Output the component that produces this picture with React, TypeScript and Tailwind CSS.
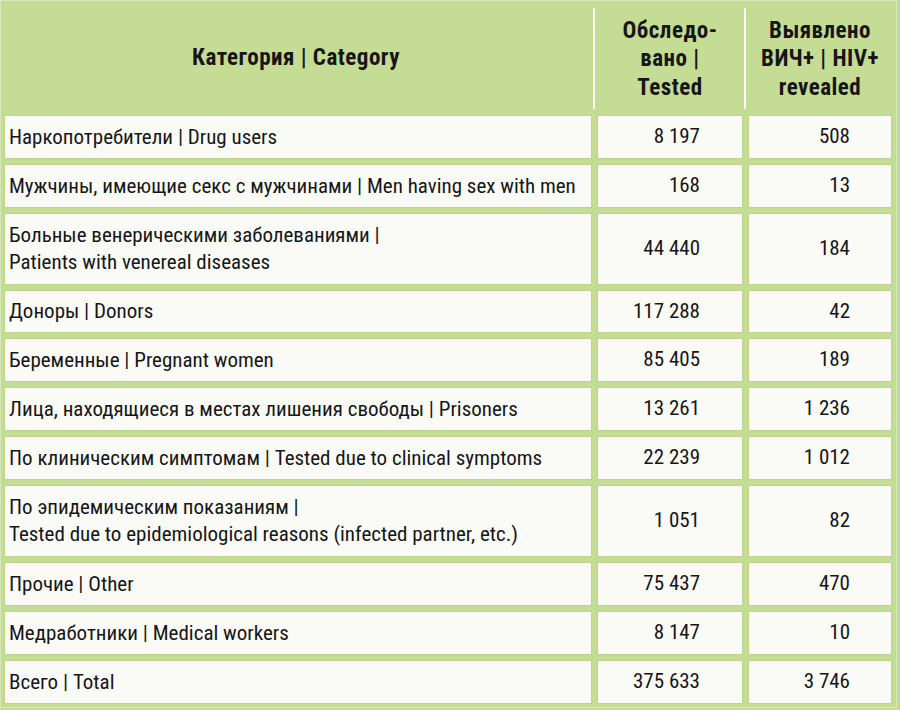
const rows: { label: string[]; tested: string; hiv: string }[] = [
  { label: ["Наркопотребители | Drug users"], tested: "8 197", hiv: "508" },
  { label: ["Мужчины, имеющие секс с мужчинами | Men having sex with men"], tested: "168", hiv: "13" },
  { label: ["Больные венерическими заболеваниями |", "Patients with venereal diseases"], tested: "44 440", hiv: "184" },
  { label: ["Доноры | Donors"], tested: "117 288", hiv: "42" },
  { label: ["Беременные | Pregnant women"], tested: "85 405", hiv: "189" },
  { label: ["Лица, находящиеся в местах лишения свободы | Prisoners"], tested: "13 261", hiv: "1 236" },
  { label: ["По клиническим симптомам | Tested due to clinical symptoms"], tested: "22 239", hiv: "1 012" },
  {
    label: ["По эпидемическим показаниям |", "Tested due to epidemiological reasons (infected partner, etc.)"],
    tested: "1 051",
    hiv: "82",
  },
  { label: ["Прочие | Other"], tested: "75 437", hiv: "470" },
  { label: ["Медработники | Medical workers"], tested: "8 147", hiv: "10" },
  { label: ["Всего | Total"], tested: "375 633", hiv: "3 746" },
]

const cell = "flex items-center bg-[#fafbf6] border border-[#bdd48a]"
const sep =
  "relative before:absolute before:bottom-[1px] before:left-[-4px] before:top-[7px] before:w-[2px] before:bg-[#fbfdf5] before:content-['']"

export default function App() {
  return (
    <div
      className="h-[710px] w-[900px] overflow-hidden bg-[#c5dc94] text-[#161616]"
      style={{ fontFamily: "'Roboto Condensed', 'Liberation Sans', sans-serif" }}
    >
      <div className="h-[708px] w-[897px] border border-[#d9e8b9]">
        <div className="grid grid-cols-[588px_146px_144px] grid-rows-[109px_44px_44px_72px_43px_44px_44px_44px_72px_44px_44px_44px] gap-x-[5px] gap-y-[5px] pl-[3px]">
          <div className="flex items-center justify-center pt-[5px] pr-[4px] text-[23px] font-bold tracking-[0.5px]">
            Категория | Category
          </div>
          <div className={`${sep} flex flex-col items-center justify-center pt-[8px] text-[23px] font-bold leading-[28.5px] tracking-[0.5px]`}>
            <span>Обследо-</span>
            <span>вано |</span>
            <span>Tested</span>
          </div>
          <div className={`${sep} flex flex-col items-center justify-center pt-[8px] text-[23px] font-bold leading-[28.5px] tracking-[0.5px]`}>
            <span>Выявлено</span>
            <span>ВИЧ+ | HIV+</span>
            <span>revealed</span>
          </div>
          {rows.map((r) => (
            <div key={r.label[0]} className="contents">
              <div className={`${cell} flex-col items-start justify-center pl-[4px] text-[21px] leading-[27px]`}>
                {r.label.map((l) => (
                  <span key={l} className="whitespace-nowrap">
                    {l}
                  </span>
                ))}
              </div>
              <div className={`${cell} justify-end pr-[42px] text-[21px]`}>{r.tested}</div>
              <div className={`${cell} justify-end pr-[41px] text-[21px]`}>{r.hiv}</div>
            </div>
          ))}
        </div>
      </div>
    </div>
  )
}
